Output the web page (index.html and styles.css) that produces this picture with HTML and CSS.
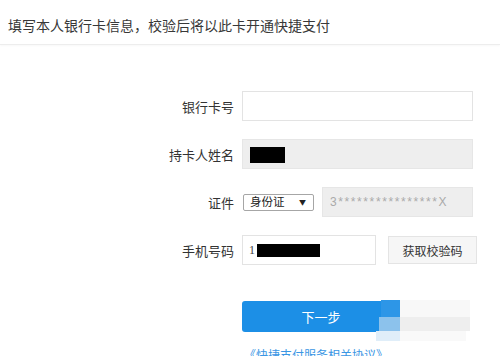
FILE: index.html
```html
<!DOCTYPE html>
<html lang="zh-CN">
<head>
<meta charset="utf-8">
<link rel="stylesheet" href="styles.css">
</head>
<body>
<div class="header">填写本人银行卡信息，校验后将以此卡开通快捷支付</div>
<div class="form">
  <div class="row">
    <div class="label">银行卡号</div>
    <div class="field"><div class="input wide"></div></div>
  </div>
  <div class="row">
    <div class="label">持卡人姓名</div>
    <div class="field"><div class="input wide disabled"><span class="redact name-redact"></span></div></div>
  </div>
  <div class="row">
    <div class="label">证件</div>
    <div class="field">
      <div class="select"><span>身份证</span><span class="arrow">▼</span></div>
      <div class="input idno disabled"><span class="idtext">3****************X</span></div>
    </div>
  </div>
  <div class="row">
    <div class="label">手机号码</div>
    <div class="field">
      <div class="input phone"><span class="phone-text">1</span><span class="redact phone-redact"></span></div>
      <div class="code-btn">获取校验码</div>
    </div>
  </div>
  <div class="row submit-row">
    <div class="label"></div>
    <div class="field"><div class="next-btn">下一步</div></div>
  </div>
  <div class="row link-row">
    <div class="label"></div>
    <div class="field"><span class="agreement">《快捷支付服务相关协议》</span></div>
  </div>
</div>
<div class="mosaic">
  <span class="m m1"></span><span class="m m2"></span><span class="m m3"></span>
  <span class="m m4"></span><span class="m m5"></span><span class="m m6"></span>
</div>
</body>
</html>
```
FILE: styles.css
```css
html, body {
  margin: 0;
  padding: 0;
  background: #fff;
  overflow: hidden;
  height: 356px;
}
body {
  font-family: "Noto Sans CJK SC", "Liberation Sans", sans-serif;
  color: #333;
  position: relative;
}
.header {
  box-sizing: border-box;
  height: 45px;
  padding: 5px 0 0 8px;
  display: flex;
  align-items: center;
  font-size: 14px;
  color: #383838;
  border-bottom: 1px solid #ededed;
  box-shadow: 0 1px 2px rgba(0,0,0,0.03);
}
.form {
  padding-top: 46px;
  display: flex;
  flex-direction: column;
  gap: 18px;
}
.row {
  display: grid;
  grid-template-columns: 234px 1fr;
  column-gap: 8px;
  align-items: center;
  height: 30px;
}
.label {
  text-align: right;
  font-size: 13px;
  color: #333;
}
.field {
  display: flex;
  align-items: center;
}
.input {
  box-sizing: border-box;
  height: 30px;
  border: 1px solid #e3e3e3;
  background: #fff;
  display: flex;
  align-items: center;
}
.wide { width: 231px; }
.disabled { background: #eeeeee; border-color: #e6e6e6; }
.redact { display: inline-block; background: #000; }
.name-redact { width: 35px; height: 16px; margin-left: 7px; margin-top: 2px; }
.select {
  box-sizing: border-box;
  width: 71px;
  height: 17px;
  margin-left: 1px;
  border: 1px solid #a6a6a6;
  border-radius: 2px;
  display: flex;
  align-items: center;
  justify-content: space-between;
  padding: 0 7px 0 6px;
  font-size: 11.5px;
  color: #222;
  line-height: 1;
}
.arrow { font-size: 7px; color: #222; }
.idno { width: 151px; margin-left: 8px; }
.idtext {
  font-family: "Liberation Sans", sans-serif;
  font-size: 12px;
  color: #aaa;
  margin-left: 7px;
  letter-spacing: 1.6px;
}
.phone { width: 134px; }
.phone-text { font-family: "Liberation Serif", serif; font-size: 12px; color: #444; margin-left: 6px; }
.phone-redact { width: 63px; height: 13px; margin-left: 2px; }
.code-btn {
  box-sizing: border-box;
  width: 89px;
  height: 28px;
  margin-left: 12px;
  border: 1px solid #e4e4e4;
  background: #f6f6f6;
  display: flex;
  align-items: center;
  justify-content: center;
  font-size: 12px;
  color: #333;
}
.submit-row { margin-top: 18px; height: 31px; }
.next-btn {
  width: 158px;
  height: 31px;
  background: #1c8fe6;
  border-radius: 3px;
  color: #fff;
  font-size: 13px;
  display: flex;
  align-items: center;
  justify-content: center;
}
.link-row { margin-top: -6px; height: 20px; }
.agreement {
  font-size: 12px;
  color: #3a96e4;
  margin-left: 2px;
}
.mosaic {
  position: absolute;
  left: 0;
  top: 0;
}
.m { position: absolute; display: block; }
.m1 { left: 381px; top: 300px; width: 19px; height: 17px; background: #2d96e7; }
.m2 { left: 379px; top: 317px; width: 21px; height: 14px; background: #8cc2ec; }
.m3 { left: 376px; top: 331px; width: 24px; height: 10px; background: #e0eef9; }
.m4 { left: 400px; top: 300px; width: 70px; height: 17px; background: #f8f8f8; }
.m5 { left: 400px; top: 317px; width: 70px; height: 14px; background: #eeeeee; }
.m6 { left: 400px; top: 331px; width: 66px; height: 10px; background: #f9f9f9; }
```
